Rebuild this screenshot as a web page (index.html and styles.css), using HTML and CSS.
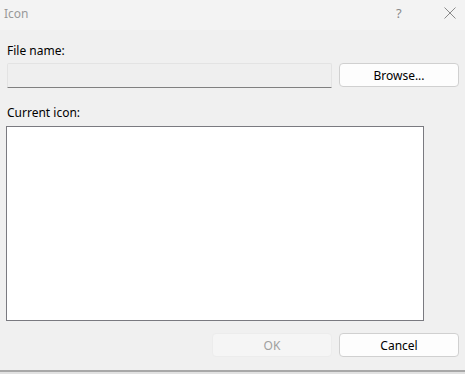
FILE: index.html
```html
<!DOCTYPE html>
<html>

<head>
	<meta charset="utf-8">
	<title>Icon</title>
	<meta name="viewport" content="width=device-width, initial-scale=1">
	<link rel="stylesheet" href="styles.css">
</head>

<body>
	<div class='dialog'>
		<div class='titlebar'>
			<span class='titlebar__title'>Icon</span>
			<span class='titlebar__help'>?</span>
			<span class='titlebar__close'>
				<svg width='12' height='12' viewBox='0 0 12 12'>
					<path d='M0.5 0.5 L11.5 11.5 M11.5 0.5 L0.5 11.5' stroke='#8a8a8a' stroke-width='1' fill='none' />
				</svg>
			</span>
		</div>
		<div class='content'>
			<p class='label label--file'>File name:</p>
			<div class='file-row'>
				<div class='field'></div>
				<button class='btn'>Browse...</button>
			</div>
			<p class='label label--icon'>Current icon:</p>
			<div class='icon-box'></div>
			<div class='actions'>
				<button class='btn btn--disabled'>OK</button>
				<button class='btn'>Cancel</button>
			</div>
		</div>
		<div class='frame-bottom'></div>
	</div>
</body>

</html>
```

FILE: styles.css
```css
/* dialog */

* {
	box-sizing: border-box;
}

html,
body {
	margin: 0;
	padding: 0;
	font-family: 'Noto Sans', 'Open Sans', sans-serif;
	font-size: 12px;
	color: #000;
	background: #f0f0f0;
}

p {
	margin: 0;
}

.dialog {
	width: 465px;
	height: 374px;
	display: flex;
	flex-direction: column;
	background: #f0f0f0;
}

/* title bar */

.titlebar {
	height: 30px;
	display: flex;
	align-items: center;
	background: #f3f3f3;
	color: #999;
}

.titlebar__title {
	flex: 1;
	padding-left: 4px;
	margin-top: -4px;
}

.titlebar__help {
	width: 12px;
	margin-right: 36px;
	margin-top: -4px;
	color: #8a8a8a;
	font-size: 13px;
}

.titlebar__close {
	display: flex;
	margin-right: 9px;
	margin-top: -4px;
}

/* content */

.content {
	flex: 1;
	padding: 0 6px 0 6px;
}

.label {
	line-height: 16px;
	padding-left: 1px;
}

.label--file {
	margin-top: 13px;
}

.file-row {
	display: flex;
	gap: 7px;
	margin-top: 4px;
	padding-left: 1px;
}

.field {
	width: 325px;
	height: 25px;
	background: #efefef;
	border: 1px solid #e3e3e3;
	border-bottom: 1px solid #808080;
	border-radius: 2px 2px 0 0;
}

.btn {
	width: 120px;
	height: 24px;
	padding: 0;
	font-family: inherit;
	font-size: 12px;
	color: #000;
	background: #fdfdfd;
	border: 1px solid #d0d0d0;
	border-radius: 4px;
}

.label--icon {
	margin-top: 17px;
}

.icon-box {
	width: 418px;
	height: 195px;
	margin-top: 5px;
	background: #fff;
	border: 1px solid #7a7a80;
}

.actions {
	display: flex;
	justify-content: flex-end;
	gap: 7px;
	margin-top: 12px;
}

.btn--disabled {
	color: #a0a0a0;
	background: #f5f5f5;
	border-color: #ececec;
}

.frame-bottom {
	height: 4px;
	border-top: 2px solid #a8a8a8;
	background: #e2e2e2;
}
```
